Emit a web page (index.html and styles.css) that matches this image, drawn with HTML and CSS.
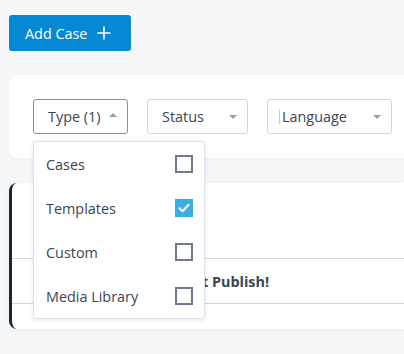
FILE: index.html
```html
<!DOCTYPE html>
<html>
<head>
<meta charset="utf-8">
<link rel="stylesheet" href="styles.css">
</head>
<body>
<div class="page">
  <button class="add-btn">Add Case
    <svg class="plus" width="14" height="14" viewBox="0 0 14 14"><path d="M7 0.5V13.5M0.5 7H13.5" stroke="#fff" stroke-width="1.6" fill="none"/></svg>
  </button>

  <div class="filters">
    <div class="select-wrap">
      <div class="select select-type open">Type (1)<span class="caret up"></span></div>
      <div class="dropdown">
        <div class="opt"><span>Cases</span><span class="cb"></span></div>
        <div class="opt"><span>Templates</span><span class="cb checked"><svg width="14" height="14" viewBox="0 0 14 14"><path d="M2.5 7.3L5.6 10.2L11.6 3.8" stroke="#fff" stroke-width="2" fill="none" stroke-linecap="round" stroke-linejoin="round"/></svg></span></div>
        <div class="opt"><span>Custom</span><span class="cb"></span></div>
        <div class="opt"><span>Media Library</span><span class="cb"></span></div>
      </div>
    </div>
    <div class="select select-status">Status<span class="caret"></span></div>
    <div class="select select-lang"><span class="cursor"></span>Language<span class="caret"></span></div>
  </div>

  <div class="cases">
    <div class="cases-head"></div>
    <div class="case-row">Do Not Publish!</div>
    <div class="cases-foot"></div>
  </div>
</div>
</body>
</html>
```
FILE: styles.css
```css
html, body {
  margin: 0;
  padding: 0;
  overflow: hidden;
}
body {
  background: #f6f7f9;
  font-family: "Open Sans", "Liberation Sans", sans-serif;
  color: #3b4555;
  width: 404px;
  height: 354px;
}
.page {
  padding: 15px 0 0 9px;
}
.add-btn {
  display: flex;
  align-items: center;
  height: 36px;
  width: 122px;
  padding: 0 0 0 16px;
  border: none;
  border-radius: 3px;
  background: #0689d4;
  color: #fff;
  font-family: "Open Sans", "Liberation Sans", sans-serif;
  font-size: 14.4px;
  gap: 10px;
}
.plus {
  display: block;
}
.filters {
  margin-top: 24px;
  width: 395px;
  height: 83px;
  box-sizing: border-box;
  background: #fff;
  border-radius: 8px 0 0 8px;
  padding: 24px 0 0 24px;
  display: flex;
  gap: 19px;
  box-shadow: 0 1px 4px rgba(30, 40, 60, 0.04);
}
.select-wrap {
  position: relative;
}
.select {
  position: relative;
  height: 35px;
  box-sizing: border-box;
  border: 1px solid #d3d6da;
  border-radius: 3px;
  padding-left: 14px;
  display: flex;
  align-items: center;
  font-size: 14.4px;
  color: #3b4555;
  background: #fff;
}
.select-type {
  width: 95px;
  border-color: #3aaee2;
}
.select-status {
  width: 101px;
}
.select-lang {
  width: 125px;
}
.cursor {
  position: absolute;
  left: 11px;
  top: 9px;
  width: 1px;
  height: 15px;
  background: #c8ccd2;
}
.caret {
  position: absolute;
  right: 10px;
  top: 15px;
  width: 0;
  height: 0;
  border-left: 4.5px solid transparent;
  border-right: 4.5px solid transparent;
  border-top: 4.5px solid #9a9ea4;
}
.caret.up {
  top: 13px;
  border-top: none;
  border-bottom: 4.5px solid #9a9ea4;
}
.dropdown {
  position: absolute;
  left: 0;
  top: 42px;
  width: 172px;
  box-sizing: border-box;
  background: #fff;
  border: 1px solid #dfe2e6;
  border-radius: 3px;
  box-shadow: 0 1px 4px rgba(20, 30, 50, 0.12);
  z-index: 10;
}
.opt {
  height: 44px;
  display: flex;
  align-items: center;
  justify-content: space-between;
  padding: 0 11px 0 12px;
  font-size: 14.4px;
  color: #3b4555;
}
.cb {
  width: 18px;
  height: 18px;
  box-sizing: border-box;
  border: 2px solid #6e7889;
  display: flex;
  align-items: center;
  justify-content: center;
}
.cb.checked {
  background: #3aaee0;
  border-color: #3aaee0;
}
.cases {
  margin-top: 25px;
  width: 395px;
  height: 146px;
  box-sizing: border-box;
  background: #fff;
  border-left: 3px solid #1e2530;
  border-radius: 8px 0 0 8px;
  box-shadow: 0 2px 6px rgba(30, 40, 60, 0.04);
}
.cases-head {
  height: 76px;
  border-bottom: 1px solid #d2d6db;
  box-sizing: border-box;
}
.case-row {
  height: 45px;
  box-sizing: border-box;
  border-bottom: 1px solid #d2d6db;
  display: flex;
  align-items: center;
  padding-left: 146px;
  font-size: 14.4px;
  font-weight: 700;
  color: #3b4555;
}
```
